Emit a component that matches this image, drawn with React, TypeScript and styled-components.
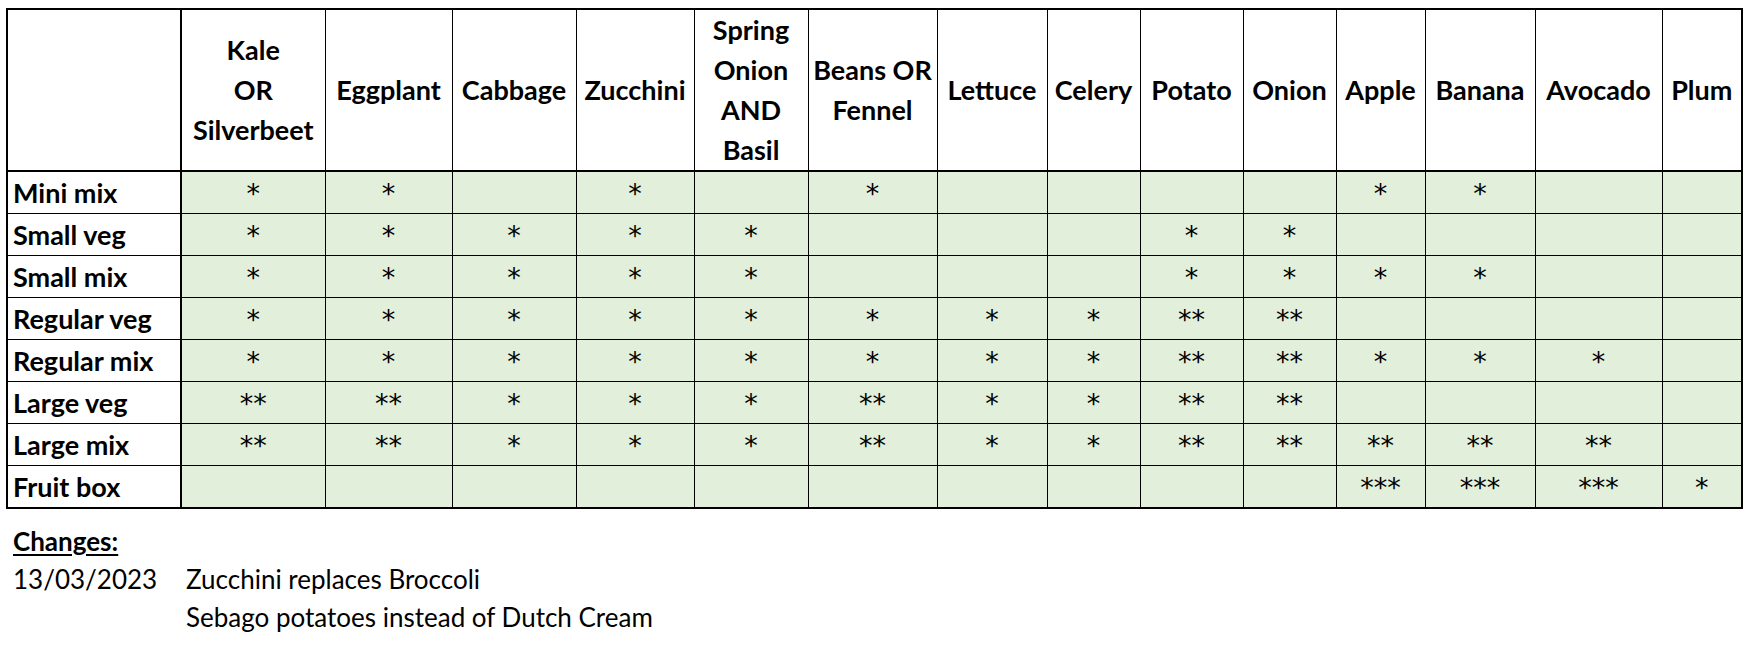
import styled, { createGlobalStyle } from 'styled-components'

const GlobalStyle = createGlobalStyle`
  html, body {
    margin: 0;
    padding: 0;
    background: #ffffff;
  }
  body {
    font-family: Lato, "Liberation Sans", sans-serif;
    color: #000000;
  }
`

const columns = [
  ['Kale', 'OR', 'Silverbeet'],
  ['Eggplant'],
  ['Cabbage'],
  ['Zucchini'],
  ['Spring', 'Onion', 'AND', 'Basil'],
  ['Beans OR', 'Fennel'],
  ['Lettuce'],
  ['Celery'],
  ['Potato'],
  ['Onion'],
  ['Apple'],
  ['Banana'],
  ['Avocado'],
  ['Plum'],
]

const widths = [174, 144, 127, 124, 118, 114, 129, 110, 93, 103, 93, 89, 110, 127, 80]

const rows: { name: string; cells: string[] }[] = [
  { name: 'Mini mix', cells: ['*', '*', '', '*', '', '*', '', '', '', '', '*', '*', '', ''] },
  { name: 'Small veg', cells: ['*', '*', '*', '*', '*', '', '', '', '*', '*', '', '', '', ''] },
  { name: 'Small mix', cells: ['*', '*', '*', '*', '*', '', '', '', '*', '*', '*', '*', '', ''] },
  { name: 'Regular veg', cells: ['*', '*', '*', '*', '*', '*', '*', '*', '**', '**', '', '', '', ''] },
  { name: 'Regular mix', cells: ['*', '*', '*', '*', '*', '*', '*', '*', '**', '**', '*', '*', '*', ''] },
  { name: 'Large veg', cells: ['**', '**', '*', '*', '*', '**', '*', '*', '**', '**', '', '', '', ''] },
  { name: 'Large mix', cells: ['**', '**', '*', '*', '*', '**', '*', '*', '**', '**', '**', '**', '**', ''] },
  { name: 'Fruit box', cells: ['', '', '', '', '', '', '', '', '', '', '***', '***', '***', '*'] },
]

const changes = [
  { date: '13/03/2023', text: 'Zucchini replaces Broccoli' },
  { date: '', text: 'Sebago potatoes instead of Dutch Cream' },
]

const Page = styled.div`
  padding: 8px 0 0 6px;
`

const Grid = styled.table`
  border-collapse: collapse;
  table-layout: fixed;
  width: 1735px;
  border: 2px solid #000;
`

const HeadCell = styled.th`
  height: 158px;
  padding: 0;
  border: 1px solid #000;
  border-bottom: 2px solid #000;
  background: #ffffff;
  font-size: 27px;
  font-weight: 700;
  line-height: 40px;
  text-align: center;
  vertical-align: middle;
  white-space: nowrap;
`

const Corner = styled(HeadCell)`
  border-right: 2px solid #000;
`

const RowLabel = styled.th`
  height: 41px;
  padding: 0 0 0 5px;
  border: 1px solid #000;
  border-right: 2px solid #000;
  background: #ffffff;
  font-size: 27px;
  font-weight: 700;
  line-height: 41px;
  text-align: left;
  vertical-align: middle;
  white-space: nowrap;
  overflow: hidden;
`

const Mark = styled.td`
  padding: 8px 0 0;
  border: 1px solid #000;
  background: #e2efda;
  font-family: "DejaVu Sans", sans-serif;
  font-size: 27px;
  line-height: 28px;
  text-align: center;
  vertical-align: top;
`

const Notes = styled.div`
  padding: 13px 0 0 7px;
  font-size: 26px;
  line-height: 38px;
`

const NotesTitle = styled.div`
  font-weight: 700;
  text-decoration: underline;
  text-underline-offset: 3px;
`

const NoteRow = styled.div`
  display: grid;
  grid-template-columns: 173px 1fr;
`

export default function App() {
  return (
    <>
      <GlobalStyle />
      <Page>
        <Grid>
          <colgroup>
            {widths.map((w, i) => (
              <col key={i} style={{ width: w }} />
            ))}
          </colgroup>
          <thead>
            <tr>
              <Corner />
              {columns.map((lines, i) => (
                <HeadCell key={i}>
                  {lines.map((l, j) => (
                    <div key={j}>{l}</div>
                  ))}
                </HeadCell>
              ))}
            </tr>
          </thead>
          <tbody>
            {rows.map((r) => (
              <tr key={r.name}>
                <RowLabel>{r.name}</RowLabel>
                {r.cells.map((c, i) => (
                  <Mark key={i}>{c}</Mark>
                ))}
              </tr>
            ))}
          </tbody>
        </Grid>
        <Notes>
          <NotesTitle>Changes:</NotesTitle>
          {changes.map((c, i) => (
            <NoteRow key={i}>
              <span>{c.date}</span>
              <span>{c.text}</span>
            </NoteRow>
          ))}
        </Notes>
      </Page>
    </>
  )
}
